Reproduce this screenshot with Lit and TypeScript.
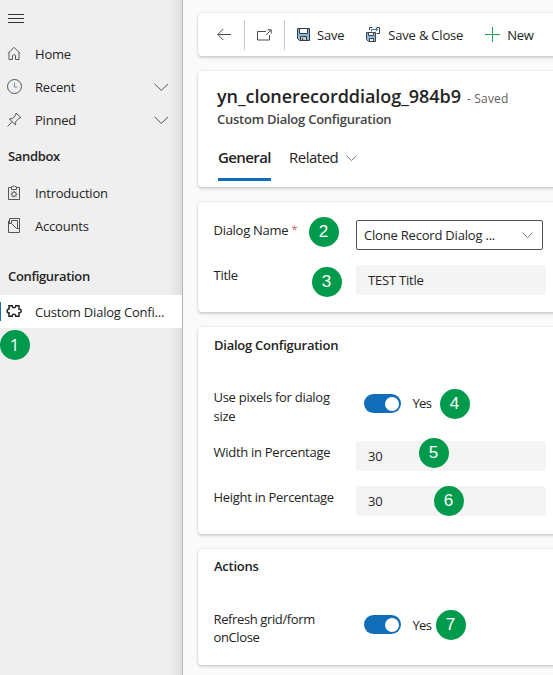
import { LitElement, html, css, svg } from "lit";
import { customElement, property } from "lit/decorators.js";

const icons: Record<string, unknown> = {
  menu: svg`<path d="M0 2.5h16M0 6.5h16M0 10.5h16"/>`,
  home: svg`<path d="M1 7.3 7 1.3l6 6M2 6.5v7h3.5V9.8q0-1 1-1h1q1 0 1 1v3.7H12v-7"/>`,
  clock: svg`<circle cx="7.5" cy="7.5" r="7"/><path d="M7.5 3.5v4.6h2.8" stroke="#6f8fae"/>`,
  pin: svg`<path d="M.5 14.5 5 10M9 1l5 4.7-2 .5-3.2 3.4-.3 3.2L2.4 7l3.2-.4L8.8 3z"/>`,
  clip: svg`<path d="M1.5 2.5h3V1.6h1.4L7 .7l.9.9h1.4v.9h3.2v12h-11z M4.5 2.5v2h5v-2"/><circle cx="7" cy="9.2" r="2.2"/><path d="M7 5.8v1.3M7 11.3v1.3M3.6 9.2h1.3M9.1 9.2h1.3M4.6 6.8l.9.9M8.5 10.7l.9.9M9.4 6.8l-.9.9M5.5 10.7l-.9.9"/>`,
  accounts: svg`<path d="M1.5 5V2.8M.9 5.5h3.6l5 5h3v4H1.5v-9M2.5 5V.5h10v10M4.5 5.2V2.5h6v7.7"/>`,
  puzzle: svg`<path stroke-width="1.5" d="M2 1.7h3.2c-.4 2.6 3.9 2.6 3.6 0H12v3.4c2.9-.3 2.9 4 0 3.7v3.4H8.8c.3-2.7-4-2.7-3.6 0H2V8.8c-2.5 0-2.5-3.7 0-3.7z"/>`,
  back: svg`<path d="M14 6.5H1M6.3 1 .8 6.5 6.3 12"/>`,
  popout: svg`<path d="M9 2.5H.5v8.5h12V6M9 6l5-5M10.5.8h3.7v3.7"/>`,
  save: svg`<path fill="#83b9e2" stroke="#3b3b3b" d="M.5.5h12v12h-10l-2-2z"/><path fill="#fff" stroke="#3b3b3b" d="M2.5.5h8v5h-8z"/><path fill="#c8c8c8" stroke="#3b3b3b" d="M3.5 8.5h6v4h-6z"/><path d="M5.5 10v2.5" stroke="#3b3b3b"/>`,
  saveclose: svg`<path d="M3.5 3V.5h3M10.5.5h3v6h-3" stroke="#444"/><path d="M5.5 4.5v-2h6M9.7.8l2 1.7-2 1.9" stroke="#2877b8"/><path fill="#83b9e2" stroke="#444" d="M.5 5.5h9v9h-7l-2-2z"/><path fill="#eee" stroke="#444" d="M2.5 5.5h5v3h-5zM3.5 11.5h4v3h-4z"/>`,
  plus: svg`<path stroke="#1aa053" d="M7.5 0v15M0 7.5h15"/>`,
  chevron: svg`<path d="M.5.8 7.3 7.4l6.8-6.6"/>`,
  small: svg`<path d="M.4.6 5.5 5.6l5.1-5"/>`,
};

@customElement("ui-icon")
class UiIcon extends LitElement {
  @property() name = "";
  static styles = css`
    :host { display: block; flex: none; width: 16px; height: 16px; }
    svg { display: block; width: 100%; height: 100%; overflow: visible; fill: none; stroke: currentColor; stroke-width: 1; }
  `;
  render() { return html`<svg>${icons[this.name]}</svg>`; }
}

@customElement("ui-toggle")
class UiToggle extends LitElement {
  static styles = css`
    :host { display: flex; align-items: center; gap: 11.5px; height: 19px; }
    .track { box-sizing: border-box; width: 37px; height: 19px; border-radius: 10px; background: #126db8; padding: 2.5px; display: flex; justify-content: flex-end; }
    .thumb { width: 14px; height: 14px; border-radius: 50%; background: #fff; }
    .word { letter-spacing: -0.7px; }
  `;
  render() { return html`<div class="track"><div class="thumb"></div></div><span class="word">Yes</span>`; }
}

@customElement("app-root")
class AppRoot extends LitElement {
  static styles = css`
    * { box-sizing: border-box; }
    :host { display: flex; position: relative; width: 553px; height: 675px; overflow: hidden; background: #fafafa; font: 13px/18px "Open Sans", "Noto Sans", sans-serif; letter-spacing: -0.2px; color: #242424; white-space: nowrap; }
    .side { flex: none; width: 183px; height: 675px; padding-top: 12px; background: linear-gradient(90deg, transparent 168px, #dedede 182px), #efefef; border-right: 1px solid #b4b4b4; }
    .menu { height: 25px; padding-left: 8px; color: #333; }
    .item { display: flex; align-items: center; height: 33px; padding-left: 7px; }
    .item ui-icon { width: 15px; height: 15px; color: #555; margin-right: 13px; }
    .item .chev { width: 15px; height: 8px; margin: 0 0 0 auto; }
    .item .chev.end { margin-right: 13px; }
    .head { height: 40px; padding: 11px 0 0 8px; font-weight: 600; letter-spacing: -0.35px; }
    .head.second { height: 53px; padding-top: 25px; }
    .selected { position: relative; background: #fff; width: 182px; }
    .selected ui-icon { color: #242424; }
    .selected::before { content: ""; position: absolute; left: 0; top: 7px; width: 1px; height: 19px; background: #126db8; }
    .main { flex: 1; min-width: 0; padding: 13px 0 0 15px; }
    .card { width: 380px; background: #fff; border-radius: 4px; box-shadow: 0 0 2px rgba(0,0,0,.16), 0 2px 3px rgba(0,0,0,.15); }
    .bar { display: flex; align-items: center; height: 43px; padding-left: 19px; margin-bottom: 15px; }
    .bar ui-icon { color: #4b4b4b; }
    .rule { width: 1px; height: 30px; background: #c8c8c8; }
    .back { width: 14px; height: 13px; margin-right: 13px; }
    .pop { width: 15px; height: 12px; margin: 0 12px 0 12px; }
    .save { width: 13px; height: 13px; margin: 0 7px 0 12px; }
    .sc { width: 14px; height: 15px; margin: 0 8px 0 22px; }
    .plus { width: 15px; height: 15px; margin: 0 7px 0 22px; }
    .title { height: 116px; padding: 12px 0 0 19px; margin-bottom: 15px; }
    .name { display: flex; align-items: baseline; height: 27px; font-size: 18px; line-height: 26px; font-weight: 600; letter-spacing: -0.05px; }
    .saved { margin-left: 6px; font-size: 12px; font-weight: 400; color: #616161; letter-spacing: 0.2px; }
    .sub { font-weight: 600; color: #444; letter-spacing: -0.24px; }
    .tabs { display: flex; margin: 18px 0 0 1px; font-size: 15px; line-height: 22px; letter-spacing: -0.5px; }
    .tabs span { margin-left: 1px; }
    .active { font-weight: 600; width: 53px; height: 35px; border-bottom: 3px solid #126db8; letter-spacing: -0.6px; margin-right: 17px; }
    .tabs ui-icon { width: 11px; height: 6px; margin: 9px 0 0 8px; color: #777; }
    .fields { height: 110px; margin-bottom: 15px; padding: 18px 0 0 16px; }
    .row { display: grid; grid-template-columns: 142px 190px; height: 45px; }
    .label { padding-top: 2px; margin-left: -.5px; letter-spacing: -0.28px; }
    .fields .label { padding-top: 1px; }
    .req { color: #b2384a; font-size: 12px; font-weight: 300; }
    .select { display: flex; align-items: center; width: 187px; height: 30px; border: 1px solid #505050; border-radius: 2px; padding: 0 9px 0 7px; justify-content: space-between; }
    .select ui-icon { width: 11px; height: 6px; color: #777; }
    .input { height: 30px; line-height: 30px; background: #f4f4f4; border-radius: 4px; padding-left: 12px; }
    .config { height: 207px; margin-bottom: 15px; padding: 9px 0 0 16px; }
    .actions { height: 116px; padding: 8px 0 0 16px; }
    h2 { margin: 0; font-size: 13px; line-height: 18px; font-weight: 600; letter-spacing: -0.25px; }
    .toggle { display: grid; grid-template-columns: 150px auto; margin-top: 35px; height: 52px; line-height: 18px; }
    .toggle ui-toggle { margin-top: 5px; }
    .config .toggle { line-height: 19px; margin-top: 34px; height: 53px; }
    .config .toggle ui-toggle { margin-top: 6px; }
    .toggle .label { padding-top: 0 !important; }
    .actions .label { letter-spacing: -0.38px; }
    .badge { position: absolute; width: 30px; height: 30px; border-radius: 50%; background: #009a4c; color: #fff; font: 17px/30px "Liberation Sans", sans-serif; text-align: center; letter-spacing: 0; }
    .b1 { left: -.5px; top: 329.5px; font-family: "Open Sans", sans-serif; }
    .b2 { left: 308.5px; top: 216.5px; }
    .b3 { left: 311.5px; top: 266.5px; }
    .b4 { left: 439.5px; top: 388.5px; }
    .b5 { left: 418.5px; top: 437.5px; }
    .b6 { left: 433.5px; top: 485.5px; }
    .b7 { left: 435.5px; top: 609.5px; }
  `;
  item(icon: string, text: string, more = false) {
    return html`<div class="item"><ui-icon name=${icon}></ui-icon><span>${text}</span>${more ? html`<ui-icon class="chev end" name="chevron"></ui-icon>` : ""}</div>`;
  }
  render() {
    return html`
      <nav class="side">
        <div class="menu"><ui-icon name="menu"></ui-icon></div>
        ${this.item("home", "Home")}${this.item("clock", "Recent", true)}${this.item("pin", "Pinned", true)}
        <div class="head">Sandbox</div>
        ${this.item("clip", "Introduction")}${this.item("accounts", "Accounts")}
        <div class="head second">Configuration</div>
        <div class="item selected"><ui-icon name="puzzle"></ui-icon><span>Custom Dialog Confi...</span></div>
      </nav>
      <main class="main">
        <div class="card bar">
          <ui-icon class="back" name="back"></ui-icon><div class="rule"></div>
          <ui-icon class="pop" name="popout"></ui-icon><div class="rule"></div>
          <ui-icon class="save" name="save"></ui-icon><span>Save</span>
          <ui-icon class="sc" name="saveclose"></ui-icon><span>Save &amp; Close</span>
          <ui-icon class="plus" name="plus"></ui-icon><span>New</span>
        </div>
        <div class="card title">
          <div class="name">yn_clonerecorddialog_984b9<span class="saved">- Saved</span></div>
          <div class="sub">Custom Dialog Configuration</div>
          <div class="tabs"><div class="active">General</div><span>Related</span><ui-icon name="small"></ui-icon></div>
        </div>
        <div class="card fields">
          <div class="row"><div class="label">Dialog Name <span class="req">*</span></div><div class="select"><span>Clone Record Dialog ...</span><ui-icon name="small"></ui-icon></div></div>
          <div class="row"><div class="label">Title</div><div class="input">TEST Title</div></div>
        </div>
        <div class="card config">
          <h2>Dialog Configuration</h2>
          <div class="toggle"><div class="label">Use pixels for dialog<br>size</div><ui-toggle></ui-toggle></div>
          <div class="row"><div class="label">Width in Percentage</div><div class="input">30</div></div>
          <div class="row"><div class="label">Height in Percentage</div><div class="input">30</div></div>
        </div>
        <div class="card actions">
          <h2>Actions</h2>
          <div class="toggle"><div class="label">Refresh grid/form<br>onClose</div><ui-toggle></ui-toggle></div>
        </div>
      </main>
      ${[1, 2, 3, 4, 5, 6, 7].map((n) => html`<div class="badge b${n}">${n}</div>`)}
    `;
  }
}
